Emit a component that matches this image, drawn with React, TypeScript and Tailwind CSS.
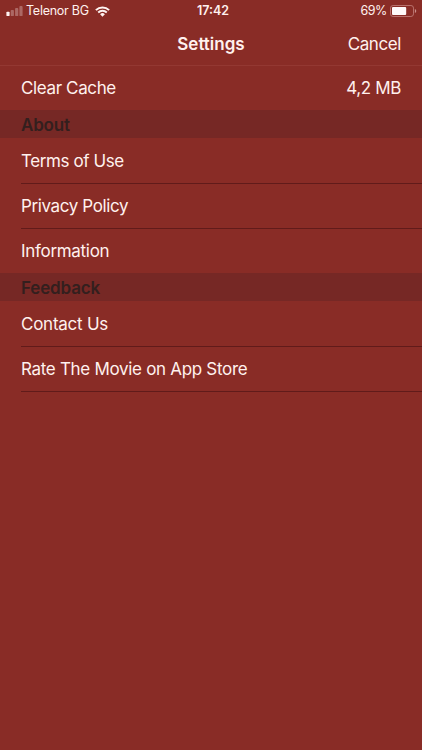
const rowText = 'text-[17px] leading-[22px] whitespace-nowrap';

function SignalIcon() {
  return (
    <svg width="17" height="12" viewBox="0 0 17 12" fill="#fff4f2">
      <rect x="0.4" y="6.7" width="3.2" height="4.4" rx="0.9" />
      <g opacity="0.3">
        <rect x="4.7" y="4.9" width="3.2" height="6.2" rx="0.9" />
        <rect x="9.1" y="3" width="3.2" height="8.1" rx="0.9" />
        <rect x="13.4" y="1.1" width="3.2" height="10" rx="0.9" />
      </g>
    </svg>
  );
}

function WifiIcon() {
  return (
    <svg width="15" height="11" viewBox="0 0 15 11" fill="none" stroke="#fff4f2">
      <path d="M0.9 4.1a9.4 9.4 0 0 1 13.2 0" strokeWidth="2" />
      <path d="M3.2 6.5a6.1 6.1 0 0 1 8.6 0" strokeWidth="1.8" />
      <path d="M7.5 10.7 5.1 8.3a3.4 3.4 0 0 1 4.8 0z" fill="#fff4f2" stroke="none" />
    </svg>
  );
}

function BatteryIcon() {
  return (
    <svg width="27" height="12" viewBox="0 0 27 12" fill="none">
      <rect x="0.5" y="0.5" width="23" height="11" rx="2.6" stroke="#b9716c" />
      <rect x="2" y="2" width="14.2" height="8" rx="1" fill="#fffafa" />
      <path d="M24.9 4.1a2 2 0 0 1 0 3.8z" fill="#c98f8a" />
    </svg>
  );
}

function SectionHeader({ title, tracking }: { title: string; tracking: string }) {
  return (
    <h2 className="flex h-7 items-center bg-[#762825] pl-[21px] pt-[2px] text-[17px] font-semibold leading-[22px] text-[#331f1e]">
      <span className={tracking}>{title}</span>
    </h2>
  );
}

function Row({ title, tracking, last = false }: { title: string; tracking: string; last?: boolean }) {
  return (
    <div className={`pl-[21px] ${last ? 'h-11' : 'h-[45px]'}`}>
      <div className={`flex h-full items-center ${last ? '' : 'border-b border-[#611b1a]'}`}>
        <span className={`${rowText} ${tracking}`}>{title}</span>
      </div>
    </div>
  );
}

export default function App() {
  return (
    <div className="h-[750px] w-full overflow-hidden bg-[#892c26] font-['Inter','Liberation_Sans',sans-serif] text-[#fff1ee]">
      <div className="grid h-[22px] grid-cols-3 items-center text-[12.5px] leading-[22px]">
        <div className="flex items-center pl-[6px]">
          <SignalIcon />
          <span className="ml-[3px] whitespace-nowrap tracking-[-0.25px]">Telenor BG</span>
          <span className="ml-[6px]"><WifiIcon /></span>
        </div>
        <span className="pl-1 text-center font-semibold">17:42</span>
        <div className="flex items-center justify-end pr-[5px]">
          <span className="mr-[3px] tracking-[-0.4px]">69%</span>
          <BatteryIcon />
        </div>
      </div>
      <header className="grid h-11 grid-cols-3 items-center border-b border-[#933832] px-[21px]">
        <span />
        <h1 className="text-center text-[17px] font-semibold leading-[22px]">Settings</h1>
        <button className="text-right text-[17px] leading-[22px] tracking-[-0.4px]">Cancel</button>
      </header>
      <div className="flex h-11 items-center justify-between px-[21px]">
        <span className={`${rowText} tracking-[-0.37px]`}>Clear Cache</span>
        <span className={`${rowText} tracking-[-0.35px]`}>4,2 MB</span>
      </div>
      <SectionHeader title="About" tracking="tracking-[-0.2px]" />
      <div className="h-px" />
      <Row title="Terms of Use" tracking="tracking-[-0.4px]" />
      <Row title="Privacy Policy" tracking="tracking-[-0.38px]" />
      <Row title="Information" tracking="tracking-[-0.3px]" last />
      <SectionHeader title="Feedback" tracking="tracking-[-0.15px]" />
      <div className="h-px" />
      <Row title="Contact Us" tracking="tracking-[-0.25px]" />
      <Row title="Rate The Movie on App Store" tracking="tracking-[-0.31px]" />
    </div>
  );
}
